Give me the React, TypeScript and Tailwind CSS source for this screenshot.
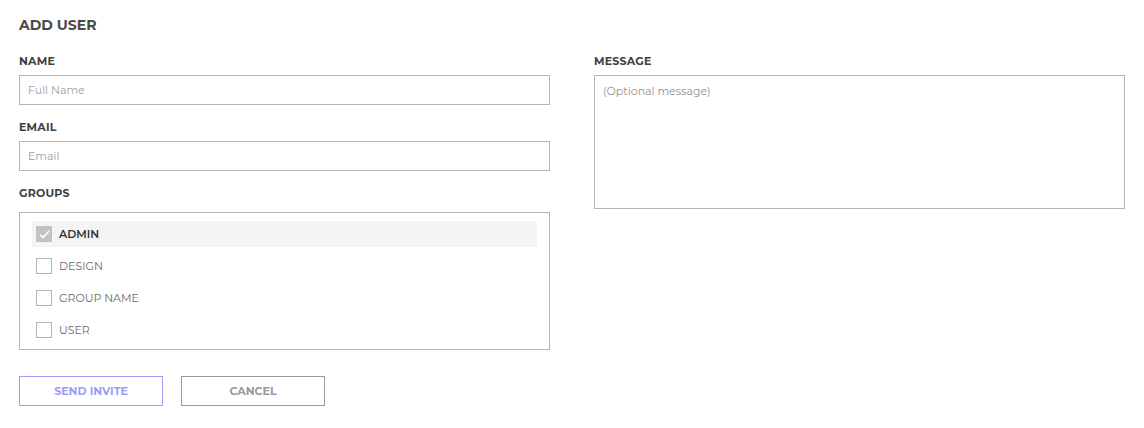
import { useState } from "react";

const GROUPS = ["ADMIN", "DESIGN", "GROUP NAME", "USER"];

function Label({ children }: { children: React.ReactNode }) {
  return (
    <label className="mb-[6px] block text-[11px] leading-[16px] font-bold tracking-[0.2px] text-[#3f3f3f]">
      {children}
    </label>
  );
}

export default function App() {
  const [checked, setChecked] = useState<string[]>(["ADMIN"]);

  const toggle = (g: string) =>
    setChecked((c) => (c.includes(g) ? c.filter((x) => x !== g) : [...c, g]));

  return (
    <div className="min-h-[428px] bg-white px-[19px] pt-[15px] font-['Montserrat','Open_Sans','Liberation_Sans',sans-serif] text-[#4a4a4a]">
      <h1 className="text-[14px] leading-[20px] font-bold text-[#4a4a4a]">ADD USER</h1>

      <div className="mt-[18px] flex gap-[44px]">
        <div className="w-[531px]">
          <Label>NAME</Label>
          <input
            placeholder="Full Name"
            className="block h-[30px] w-full border border-[#b5b5b5] px-[8px] text-[11px] text-[#4a4a4a] outline-none placeholder:text-[#a0a0a0]"
          />

          <div className="mt-[14px]">
            <Label>EMAIL</Label>
            <input
              placeholder="Email"
              className="block h-[30px] w-full border border-[#b5b5b5] px-[8px] text-[11px] text-[#4a4a4a] outline-none placeholder:text-[#a0a0a0]"
            />
          </div>

          <div className="mt-[14px]">
            <div className="mb-[11px] text-[11px] leading-[16px] font-bold tracking-[0.2px] text-[#3f3f3f]">
              GROUPS
            </div>
            <div className="flex h-[138px] flex-col gap-[6px] border border-[#b5b5b5] px-[12px] pt-[8px] pb-[6px]">
              {GROUPS.map((g) => {
                const on = checked.includes(g);
                return (
                  <button
                    key={g}
                    onClick={() => toggle(g)}
                    className={`flex h-[26px] items-center gap-[7px] pl-[4px] text-left text-[11px] ${
                      on ? "bg-[#f4f4f4] font-semibold text-[#333]" : "font-normal text-[#6b6b6b]"
                    }`}
                  >
                    <span
                      className={`flex h-[16px] w-[16px] shrink-0 items-center justify-center border ${
                        on ? "border-[#c2c2c2] bg-[#c2c2c2]" : "border-[#b5b5b5] bg-white"
                      }`}
                    >
                      {on && (
                        <svg width="11" height="9" viewBox="0 0 11 9" fill="none">
                          <path d="M1 4.5 L4 7.5 L10 1" stroke="white" strokeWidth="1.6" />
                        </svg>
                      )}
                    </span>
                    {g}
                  </button>
                );
              })}
            </div>
          </div>

          <div className="mt-[26px] flex gap-[18px]">
            <button className="h-[30px] w-[144px] border border-[#9d9cf8] text-[11px] font-bold text-[#9d9cf8]">
              SEND INVITE
            </button>
            <button className="h-[30px] w-[144px] border border-[#9a9a9a] text-[11px] font-bold text-[#9a9a9a]">
              CANCEL
            </button>
          </div>
        </div>

        <div className="w-[531px]">
          <Label>MESSAGE</Label>
          <textarea
            placeholder="(Optional message)"
            className="block h-[134px] w-full resize-none border border-[#b5b5b5] px-[8px] pt-[7px] text-[11px] text-[#4a4a4a] outline-none placeholder:text-[#8f8f8f]"
          />
        </div>
      </div>
    </div>
  );
}
